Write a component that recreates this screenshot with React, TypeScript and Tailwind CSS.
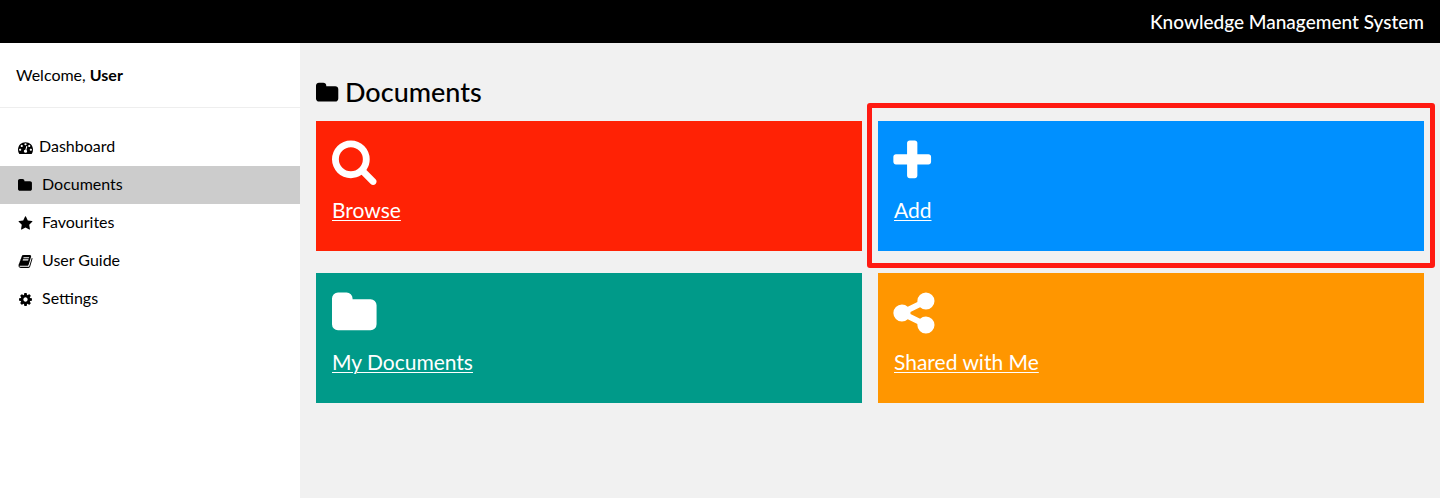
import React from "react";

type Glyph = { viewBox: string; path: string };

const glyphs = {
  dashboard: {
    viewBox: "0 0 1792 1792",
    path: "M384 1152q0-53-37.5-90.5t-90.5-37.5-90.5 37.5-37.5 90.5 37.5 90.5 90.5 37.5 90.5-37.5 37.5-90.5zm192-448q0-53-37.5-90.5t-90.5-37.5-90.5 37.5-37.5 90.5 37.5 90.5 90.5 37.5 90.5-37.5 37.5-90.5zm428 481l101-382q6-26-7.5-48.5t-38.5-29.5-48 6.5-30 39.5l-101 382q-60 5-107 43.5t-63 98.5q-20 77 20 146t117 89 146-20 89-117q16-60-6-117t-72-91zm660-33q0-53-37.5-90.5t-90.5-37.5-90.5 37.5-37.5 90.5 37.5 90.5 90.5 37.5 90.5-37.5 37.5-90.5zm-640-640q0-53-37.5-90.5t-90.5-37.5-90.5 37.5-37.5 90.5 37.5 90.5 90.5 37.5 90.5-37.5 37.5-90.5zm448 192q0-53-37.5-90.5t-90.5-37.5-90.5 37.5-37.5 90.5 37.5 90.5 90.5 37.5 90.5-37.5 37.5-90.5zm320 448q0 261-141 483-19 29-54 29h-1402q-35 0-54-29-141-221-141-483 0-182 71-348t191-286 286-191 348-71 348 71 286 191 191 286 71 348z",
  },
  folder: {
    viewBox: "64 0 1792 1792",
    path: "M1728 608v704q0 92-66 158t-158 66h-1216q-92 0-158-66t-66-158v-960q0-92 66-158t158-66h320q92 0 158 66t66 158v32h672q92 0 158 66t66 158z",
  },
  star: {
    viewBox: "0 0 1792 1792",
    path: "M1728 647q0 22-26 48l-363 354 86 500q1 7 1 20 0 21-10.5 35.5t-30.5 14.5q-19 0-40-12l-449-236-449 236q-22 12-40 12-21 0-31.5-14.5t-10.5-35.5q0-6 2-20l86-500-364-354q-25-27-25-48 0-37 56-46l502-73 225-455q19-41 49-41t49 41l225 455 502 73q56 9 56 46z",
  },
  book: {
    viewBox: "0 0 1792 1792",
    path: "M1703 478q40 57 18 129l-275 906q-19 64-76.5 107.5t-122.5 43.5h-923q-77 0-148.5-53.5t-99.5-131.5q-24-67-2-127 0-4 3-27t4-37q1-8-3-21.5t-3-19.5q2-11 8-21t16.5-23.5 16.5-23.5q23-38 45-91.5t30-91.5q3-10 .5-30t-.5-28q3-11 17-28t17-23q21-36 42-92t25-90q1-9-2.5-32t.5-28q4-13 22-30.5t22-22.5q19-26 42.5-84.5t27.5-96.5q1-8-3-25.5t-2-26.5q2-8 9-18t18-23 17-21q8-12 16.5-30.5t15-35 16-36 19.5-32 26.5-23.5 36-11.5 47.5 5.5l-1 3q38-9 51-9h761q74 0 114 56t18 130l-274 906q-36 119-71.5 153.5t-128.5 34.5h-869q-27 0-38 15-11 16-1 43 24 70 144 70h923q29 0 56-15.5t35-41.5l300-987q7-22 5-57 38 15 59 43zm-1064 2q-4 13 2 22.5t20 9.5h608q13 0 25.5-9.5t16.5-22.5l21-64q4-13-2-22.5t-20-9.5h-608q-13 0-25.5 9.5t-16.5 22.5zm-83 256q-4 13 2 22.5t20 9.5h608q13 0 25.5-9.5t16.5-22.5l21-64q4-13-2-22.5t-20-9.5h-608q-13 0-25.5 9.5t-16.5 22.5z",
  },
  cog: {
    viewBox: "0 0 1792 1792",
    path: "M1152 896q0-106-75-181t-181-75-181 75-75 181 75 181 181 75 181-75 75-181zm512-109v222q0 12-8 23t-20 13l-185 28q-19 54-39 91 35 50 107 138 10 12 10 25t-9 23q-27 37-99 108t-94 71q-12 0-26-9l-138-108q-44 23-91 38-16 136-29 186-7 28-36 28h-222q-14 0-24.5-8.5t-11.5-21.5l-28-184q-49-16-90-37l-141 107q-10 9-25 9-14 0-25-11-126-114-165-168-7-10-7-23 0-12 8-23 15-21 51-66.5t54-70.5q-27-50-41-99l-183-27q-13-2-21-12.5t-8-23.5v-222q0-12 8-23t19-13l186-28q14-46 39-92-40-57-107-138-10-12-10-24 0-10 9-23 26-36 98.5-107.5t94.5-71.5q13 0 26 10l138 107q44-23 91-38 16-136 29-186 7-28 36-28h222q14 0 24.5 8.5t11.5 21.5l28 184q49 16 90 37l142-107q9-9 24-9 13 0 25 10 129 119 165 170 7 8 7 22 0 12-8 23-15 21-51 66.5t-54 70.5q26 50 41 98l183 28q13 2 21 12.5t8 23.5z",
  },
  search: {
    viewBox: "64 0 1792 1792",
    path: "M1216 832q0-185-131.5-316.5t-316.5-131.5-316.5 131.5-131.5 316.5 131.5 316.5 316.5 131.5 316.5-131.5 131.5-316.5zm512 832q0 52-38 90t-90 38q-54 0-90-38l-343-342q-179 124-399 124-143 0-273.5-55.5t-225-150-150-225-55.5-273.5 55.5-273.5 150-225 225-150 273.5-55.5 273.5 55.5 225 150 150 225 55.5 273.5q0 220-124 399l343 343q37 37 37 90z",
  },
  plus: {
    viewBox: "216 0 1792 1792",
    path: "M1600 736v192q0 40-28 68t-68 28h-416v416q0 40-28 68t-68 28h-192q-40 0-68-28t-28-68v-416h-416q-40 0-68-28t-28-68v-192q0-40 28-68t68-28h416v-416q0-40 28-68t68-28h192q40 0 68 28t28 68v416h416q40 0 68 28t28 68z",
  },
  share: {
    viewBox: "152 0 1792 1792",
    path: "M1344 1024q133 0 226.5 93.5t93.5 226.5-93.5 226.5-226.5 93.5-226.5-93.5-93.5-226.5q0-12 2-34l-360-180q-92 86-218 86-133 0-226.5-93.5t-93.5-226.5 93.5-226.5 226.5-93.5q126 0 218 86l360-180q-2-22-2-34 0-133 93.5-226.5t226.5-93.5 226.5 93.5 93.5 226.5-93.5 226.5-226.5 93.5q-126 0-218-86l-360 180q2 22 2 34t-2 34l360 180q92-86 218-86z",
  },
} satisfies Record<string, Glyph>;

function Icon({ glyph, className }: { glyph: Glyph; className: string }) {
  return (
    <svg viewBox={glyph.viewBox} className={`shrink-0 overflow-visible fill-current ${className}`} aria-hidden="true">
      <path d={glyph.path} />
    </svg>
  );
}

const menu = [
  { label: "Dashboard", glyph: glyphs.dashboard, gap: "gap-1.5", active: false },
  { label: "Documents", glyph: glyphs.folder, gap: "gap-[9px]", active: true },
  { label: "Favourites", glyph: glyphs.star, gap: "gap-[9px]", active: false },
  { label: "User Guide", glyph: glyphs.book, gap: "gap-[9px]", active: false },
  { label: "Settings", glyph: glyphs.cog, gap: "gap-[9px]", active: false },
];

const tiles = [
  { label: "Browse", glyph: glyphs.search, color: "bg-[#ff2205]", highlighted: false },
  { label: "Add", glyph: glyphs.plus, color: "bg-[#0090ff]", highlighted: true },
  { label: "My Documents", glyph: glyphs.folder, color: "bg-[#009a89]", highlighted: false },
  { label: "Shared with Me", glyph: glyphs.share, color: "bg-[#ff9600]", highlighted: false },
];

export default function App() {
  return (
    <div className="flex min-h-screen flex-col bg-[#f1f1f1] font-['Lato',sans-serif] text-base text-black">
      <header className="flex justify-end bg-black px-4 py-2 text-[19px] leading-[27px] font-medium text-white">
        <span>Knowledge Management System</span>
      </header>

      <div className="flex flex-1">
        <aside className="w-[300px] shrink-0 bg-white">
          <p className="border-b border-[#eeeeee] px-4 py-5 leading-6">
            Welcome, <strong>User</strong>
          </p>
          <nav className="pt-5">
            {menu.map((item) => (
              <a
                key={item.label}
                href="#"
                aria-current={item.active ? "page" : undefined}
                className={`flex h-[38px] items-center px-[18px] ${item.gap} ${item.active ? "bg-[#cccccc]" : ""}`}
              >
                <Icon glyph={item.glyph} className="size-[15px]" />
                <span className="pb-0.5">{item.label}</span>
              </a>
            ))}
          </nav>
        </aside>

        <main className="min-w-0 flex-1 px-4 pt-8">
          <h1 className="flex items-center gap-[5px] pb-2.5 text-[27px] leading-[34px] font-medium">
            <Icon glyph={glyphs.folder} className="size-6" />
            <span className="pb-0.5">Documents</span>
          </h1>
          <div className="grid grid-cols-2 gap-x-4 gap-y-[22px]">
            {tiles.map((tile) => (
              <section key={tile.label} className={`relative h-[130px] p-4 text-white ${tile.color}`}>
                <Icon glyph={tile.glyph} className="size-12" />
                <a
                  href="#"
                  className="mt-3 inline-block text-[21px] leading-[26px] underline decoration-1 underline-offset-2"
                >
                  {tile.label}
                </a>
                {tile.highlighted && (
                  <div className="pointer-events-none absolute -inset-x-[11px] -top-[18px] -bottom-[17px] rounded-[3px] border-5 border-[#ff1a12]" />
                )}
              </section>
            ))}
          </div>
        </main>
      </div>
    </div>
  );
}
